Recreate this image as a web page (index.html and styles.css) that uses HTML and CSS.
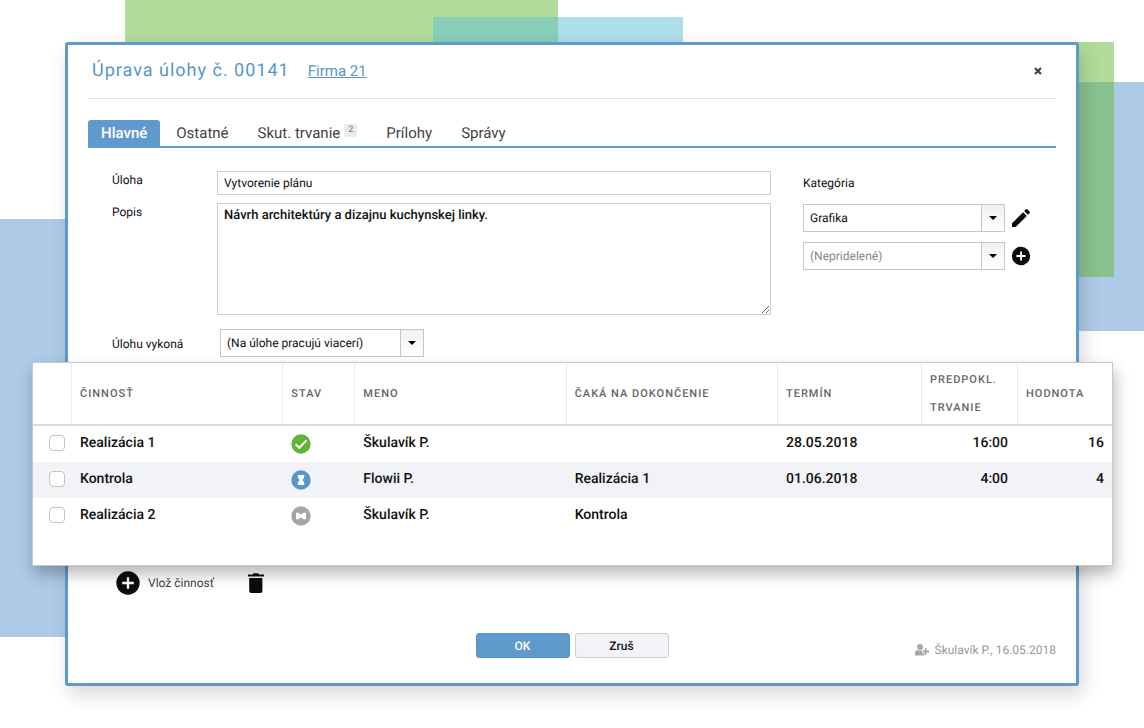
FILE: index.html
```html
<!DOCTYPE html>
<html lang="sk">
<head>
<meta charset="utf-8">
<title>Úprava úlohy č. 00141</title>
<meta name="viewport" content="width=device-width, initial-scale=1">
<link rel="stylesheet" href="styles.css">
</head>
<body>
<div class="scene">
  <div class="shape shape-blue-left"></div>
  <div class="shape shape-green-top"></div>
  <div class="shape shape-teal"></div>
  <div class="shape shape-blue-right"></div>
  <div class="shape shape-green-right"></div>

  <main class="dialog">
    <header class="dialog-header">
      <h1 class="title">Úprava úlohy č. 00141</h1>
      <a class="company" href="#">Firma 21</a>
      <button class="close" type="button" aria-label="Zavrieť">
        <svg width="8" height="8" viewBox="0 0 8 8"><path d="M1 1l6 6M7 1L1 7" stroke="#444" stroke-width="2.2" fill="none"/></svg>
      </button>
    </header>

    <nav class="tabs">
      <a class="tab tab-active" href="#">Hlavné</a>
      <a class="tab" href="#">Ostatné</a>
      <a class="tab" href="#">Skut. trvanie<span class="count">2</span></a>
      <a class="tab" href="#">Prílohy</a>
      <a class="tab" href="#">Správy</a>
    </nav>

    <form class="form">
      <div class="fields">
        <label class="label" for="task">Úloha</label>
        <input class="text" id="task" type="text" value="Vytvorenie plánu">
        <label class="label" for="desc">Popis</label>
        <textarea class="area" id="desc">Návrh architektúry a dizajnu kuchynskej linky.</textarea>
        <label class="label label-middle" for="who">Úlohu vykoná</label>
        <span class="combo combo-who">
          <select id="who"><option>(Na úlohe pracujú viacerí)</option></select>
          <span class="arrow"><svg width="8" height="4" viewBox="0 0 8 4"><path d="M0 0h8L4 4z"/></svg></span>
        </span>
      </div>
      <div class="category">
        <label class="category-label" for="cat">Kategória</label>
        <div class="category-row">
          <span class="combo">
            <select id="cat"><option>Grafika</option></select>
            <span class="arrow"><svg width="8" height="4" viewBox="0 0 8 4"><path d="M0 0h8L4 4z"/></svg></span>
          </span>
          <button class="icon-button" type="button" aria-label="Upraviť">
            <svg width="24" height="24" viewBox="0 0 24 24"><path d="M3 17.25V21h3.75L17.81 9.94l-3.75-3.75L3 17.25zM20.71 7.04a1 1 0 0 0 0-1.41l-2.34-2.34a1 1 0 0 0-1.41 0l-1.83 1.83 3.75 3.75 1.83-1.83z" fill="#0c0c0c"/></svg>
          </button>
        </div>
        <div class="category-row">
          <span class="combo combo-empty">
            <select aria-label="Ďalšia kategória"><option>(Nepridelené)</option></select>
            <span class="arrow"><svg width="8" height="4" viewBox="0 0 8 4"><path d="M0 0h8L4 4z"/></svg></span>
          </span>
          <button class="icon-button" type="button" aria-label="Pridať kategóriu">
            <svg width="22" height="22" viewBox="0 0 24 24"><path d="M12 2a10 10 0 1 0 0 20 10 10 0 0 0 0-20zm5 11h-4v4h-2v-4H7v-2h4V7h2v4h4v2z" fill="#0c0c0c"/></svg>
          </button>
        </div>
      </div>
    </form>

    <section class="panel">
      <table class="grid">
        <colgroup>
          <col class="col-check"><col><col class="col-state"><col><col><col class="col-date"><col class="col-time"><col class="col-value">
        </colgroup>
        <thead>
          <tr><th></th><th>Činnosť</th><th>Stav</th><th>Meno</th><th>Čaká na dokončenie</th><th>Termín</th><th>Predpokl. trvanie</th><th>Hodnota</th></tr>
        </thead>
        <tbody>
          <tr>
            <td class="check-cell"><input class="check" type="checkbox" aria-label="Realizácia 1"></td>
            <td>Realizácia 1</td>
            <td><svg class="state" width="20" height="20" viewBox="0 0 20 20"><circle cx="10" cy="10" r="9.7" fill="#5fb336"/><path d="M4.6 10.2l3.7 3.6 7.2-7.4" fill="none" stroke="#fff" stroke-width="2"/></svg></td>
            <td>Škulavík P.</td><td></td><td>28.05.2018</td><td class="num time">16:00</td><td class="num">16</td>
          </tr>
          <tr>
            <td class="check-cell"><input class="check" type="checkbox" aria-label="Kontrola"></td>
            <td>Kontrola</td>
            <td><svg class="state" width="20" height="20" viewBox="0 0 20 20"><circle cx="10" cy="10" r="9.7" fill="#5796cb"/><path d="M6.8 5h6.4v2.6L11.4 10l1.8 2.4V15H6.8v-2.6L8.6 10 6.8 7.6z" fill="#fff"/></svg></td>
            <td>Flowii P.</td><td>Realizácia 1</td><td>01.06.2018</td><td class="num time">4:00</td><td class="num">4</td>
          </tr>
          <tr>
            <td class="check-cell"><input class="check" type="checkbox" aria-label="Realizácia 2"></td>
            <td>Realizácia 2</td>
            <td><svg class="state" width="20" height="20" viewBox="0 0 20 20"><circle cx="10" cy="10" r="9.7" fill="#a5a5a5"/><path d="M5 6.8v6.4h2.6l2.4-1.8 2.4 1.8H15V6.8h-2.6L10 8.6 7.6 6.8z" fill="#fff"/></svg></td>
            <td>Škulavík P.</td><td>Kontrola</td><td></td><td></td><td></td>
          </tr>
        </tbody>
      </table>
    </section>

    <div class="actions">
      <button class="add" type="button">
        <svg width="28" height="28" viewBox="0 0 24 24"><path d="M12 2a10 10 0 1 0 0 20 10 10 0 0 0 0-20zm5 11h-4v4h-2v-4H7v-2h4V7h2v4h4v2z" fill="#0c0c0c"/></svg>
        <span>Vlož činnosť</span>
      </button>
      <button class="delete" type="button" aria-label="Odstrániť">
        <svg width="16" height="20" viewBox="0 0 16 20"><path d="M1.2 5h13.2v13a2 2 0 0 1-2 2H3.2a2 2 0 0 1-2-2zM0 1.4h4.600l1-1.100h4.600l1 1.100H16v2.200H0z" fill="#0c0c0c"/></svg>
      </button>
    </div>

    <footer class="footer">
      <div class="buttons">
        <button class="button button-primary" type="button">OK</button>
        <button class="button" type="button">Zruš</button>
      </div>
      <div class="author">
        <svg width="14" height="12" viewBox="0 0 14 12"><circle cx="5" cy="3" r="2.900" fill="#a6a6a6"/><path d="M0 11V8.500Q0 6.200 2.500 6q2.500 1.200 4.500.2V9.300h2.400V11q0 .6-.8.600H.8Q0 11.600 0 11z" fill="#a6a6a6"/><path d="M10.800 4.200v6.600M7.600 7.500H14" stroke="#a6a6a6" stroke-width="1.800" fill="none"/></svg>
        <span>Škulavík P., 16.05.2018</span>
      </div>
    </footer>
  </main>
</div>
</body>
</html>
```
FILE: styles.css
```css
* {
  box-sizing: border-box;
}

body {
  margin: 0;
  background: #fff;
  color: #111;
  font-family: Roboto, "Liberation Sans", sans-serif;
  font-size: 12px;
  text-rendering: geometricPrecision;
}

button,
input,
select,
textarea {
  font: inherit;
  color: inherit;
  text-rendering: inherit;
}

button {
  border: 0;
  padding: 0;
  background: none;
  cursor: pointer;
}

svg {
  display: block;
  flex: none;
}

.scene {
  position: relative;
  min-height: 100vh;
  padding: 42px 65px;
  overflow: hidden;
}

/* Decorative rectangles behind the dialog */
.shape {
  position: absolute;
}

.shape-blue-left {
  left: 0;
  top: 219px;
  width: 200px;
  height: 418px;
  background: #adcbe7;
}

.shape-green-top {
  left: 125px;
  top: 0;
  width: 433px;
  height: 120px;
  background: #b2dc9b;
}

.shape-teal {
  left: 433px;
  top: 17px;
  width: 250px;
  height: 120px;
  background: rgba(93, 189, 209, 0.5);
}

.shape-blue-right {
  right: 0;
  top: 82px;
  width: 200px;
  height: 249px;
  background: #adcbe7;
}

.shape-green-right {
  right: 30px;
  top: 42px;
  width: 200px;
  height: 235px;
  background: rgba(101, 185, 55, 0.5);
}

.dialog {
  position: relative;
  padding: 0 20px 25px;
  border: 3px solid #5f9acc;
  border-radius: 3px;
  background: #fff;
  box-shadow: 4px 8px 20px rgba(0, 0, 0, 0.16);
}

.dialog-header {
  display: flex;
  align-items: center;
  gap: 18px;
  height: 54px;
  padding: 0 14px 2px 4px;
  border-bottom: 1px solid #e2e2e2;
}

.title {
  margin: 0;
  color: #5796cb;
  font-size: 18px;
  font-weight: 400;
  letter-spacing: 1px;
}

.company {
  color: #5796cb;
  font-size: 15px;
}

.close {
  margin-left: auto;
}

.tabs {
  display: flex;
  gap: 3px;
  margin-top: 21px;
  border-bottom: 2px solid #5f9acc;
}

.tab {
  display: flex;
  padding: 1px 13px 0;
  color: #444;
  font-size: 15px;
  line-height: 25px;
  text-decoration: none;
}

.tab-active {
  border-radius: 3px 3px 0 0;
  background: #5f9acc;
  color: #fff;
  font-weight: 500;
}

.count {
  align-self: flex-start;
  margin: 3px 0 0 4px;
  padding: 0 4px;
  border-radius: 2px;
  background: #ebebeb;
  color: #777;
  font-size: 9px;
  line-height: 13px;
}

.form {
  display: flex;
  gap: 32px;
  padding: 23px 23px 5px 24px;
}

.fields {
  flex: 1;
  display: grid;
  grid-template-columns: 105px 1fr;
  grid-template-rows: 24px 112px 34px;
  row-gap: 8px;
}

.label {
  padding-top: 1px;
  line-height: 16px;
}

.label-middle {
  padding-top: 13px;
}

.text,
.area {
  width: 100%;
  border: 1px solid #ccc;
  background: #fff;
}

.text {
  padding: 0 6px;
}

.area {
  padding: 4px 6px;
  font-size: 13px;
  font-weight: 500;
  line-height: 16px;
  resize: vertical;
}

.combo {
  display: grid;
  grid-template-columns: 1fr 24px;
  width: 202px;
  height: 28px;
}

.combo-who {
  width: 204px;
  margin: 6px 0 0 3px;
}

.combo select {
  grid-area: 1 / 1 / 2 / 3;
  width: 100%;
  padding: 0 30px 0 6px;
  border: 1px solid #c6c6c6;
  border-radius: 0;
  background: #fff;
  appearance: none;
}

.combo-empty select {
  color: #888;
}

.arrow {
  grid-area: 1 / 2;
  display: flex;
  align-items: center;
  justify-content: center;
  border: 1px solid #c6c6c6;
  background: linear-gradient(#f1f1f1, #fff);
  pointer-events: none;
}

.category {
  display: flex;
  flex-direction: column;
  gap: 10px;
}

.category-label {
  margin-bottom: 3px;
  padding-top: 4px;
  line-height: 16px;
}

.category-row {
  display: flex;
  align-items: center;
  gap: 4px;
}

.icon-button {
  display: flex;
  align-items: center;
  justify-content: center;
  width: 24px;
  height: 28px;
}

/* Table panel, wider than the dialog that holds it */
.panel {
  position: relative;
  margin: 0 -57px 0 -56px;
  padding-bottom: 31px;
  border: 1px solid #c8c8c8;
  background: #fff;
  box-shadow: 2px 8px 14px rgba(0, 0, 0, 0.28);
}

.grid {
  width: 100%;
  table-layout: fixed;
  border-collapse: separate;
  border-spacing: 0;
  font-size: 14px;
  font-weight: 500;
}

.col-check {
  width: 39px;
}

.col-state {
  width: 72px;
}

.col-date {
  width: 144px;
}

.col-time {
  width: 96px;
}

.col-value {
  width: 94px;
}

.grid th {
  height: 63px;
  padding: 0 8px;
  border-right: 1px solid #ebebeb;
  border-bottom: 2px solid #dcdcdc;
  color: #666;
  font-size: 11px;
  font-weight: 500;
  letter-spacing: 1px;
  line-height: 28px;
  text-align: left;
  text-transform: uppercase;
}

.grid th:last-child {
  border-right: 0;
}

.grid td {
  height: 36px;
  padding: 0 8px 3px;
}

.grid tbody tr:nth-child(even) {
  background: #f1f3f7;
}

.grid .check-cell {
  padding-left: 16px;
}

.grid .num {
  text-align: right;
}

.grid .time {
  padding-right: 10px;
}

.state {
  margin-top: 2px;
}

.check {
  display: block;
  width: 16px;
  height: 16px;
  margin: 0;
  border: 1px solid #c4c4c4;
  border-radius: 4px;
  background: #fff;
  appearance: none;
}

.check:checked {
  background: #5796cb;
}

.actions {
  display: flex;
  align-items: center;
  gap: 34px;
  height: 34px;
  padding-left: 26px;
}

.add {
  display: flex;
  align-items: center;
  gap: 6px;
  color: #444;
}

.footer {
  display: grid;
  grid-template-columns: 1fr auto 1fr;
  align-items: start;
  margin-top: 33px;
}

.buttons {
  grid-column: 2;
  display: flex;
  gap: 5px;
}

.button {
  width: 94px;
  height: 25px;
  border: 1px solid #ccd0d2;
  border-radius: 3px;
  background: #f1f3f7;
  color: #111;
  font-weight: 500;
}

.button-primary {
  border-color: #5796cb;
  background: #5f9acc;
  color: #fff;
}

.author {
  display: flex;
  align-items: center;
  justify-content: flex-end;
  gap: 6px;
  margin-top: 9px;
  color: #999;
  line-height: 16px;
}
```
